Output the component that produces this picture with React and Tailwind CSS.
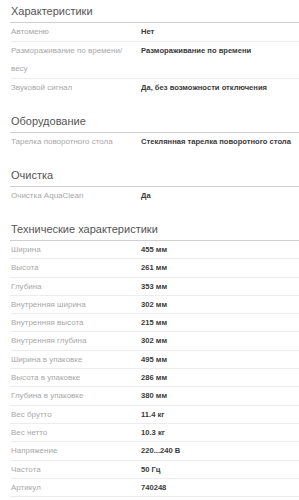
const sections = [
  {
    title: "Характеристики",
    rows: [
      ["Автоменю", "Нет"],
      ["Размораживание по времени/ весу", "Размораживание по времени"],
      ["Звуковой сигнал", "Да, без возможности отключения"],
    ],
  },
  {
    title: "Оборудование",
    rows: [["Тарелка поворотного стола", "Стеклянная тарелка поворотного стола"]],
  },
  {
    title: "Очистка",
    rows: [["Очистка AquaClean", "Да"]],
  },
  {
    title: "Технические характеристики",
    dense: true,
    rows: [
      ["Ширина", "455 мм"],
      ["Высота", "261 мм"],
      ["Глубина", "353 мм"],
      ["Внутренняя ширина", "302 мм"],
      ["Внутренняя высота", "215 мм"],
      ["Внутренняя глубина", "302 мм"],
      ["Ширина в упаковке", "495 мм"],
      ["Высота в упаковке", "286 мм"],
      ["Глубина в упаковке", "380 мм"],
      ["Вес брутто", "11.4 кг"],
      ["Вес нетто", "10.3 кг"],
      ["Напряжение", "220...240 В"],
      ["Частота", "50 Гц"],
      ["Артикул", "740248"],
    ],
  },
];

export default function App() {
  return (
    <div className="h-[500px] overflow-hidden bg-white pl-[10px] font-['Liberation_Sans',Arial,sans-serif]">
      {sections.map((section, i) => (
        <section key={section.title} className={i ? "mt-[13px]" : ""}>
          <h2 className="border-b border-[#cfcfcf] pt-[4px] pb-[4px] pl-[1px] text-[11px] font-normal leading-[14px] text-[#555]">
            {section.title}
          </h2>
          <div className={section.dense ? "border-b border-[#ececec]" : ""}>
            {section.rows.map(([label, value], j) => (
              <div
                key={label}
                className={`flex text-[8px] ${section.dense ? "leading-[17.3px]" : "leading-[18px]"} ${j ? "border-t border-[#ececec]" : ""}`}
              >
                <div className="w-[130px] shrink-0 pl-[1px] pr-[10px] text-[#a8a8a8]">{label}</div>
                <div className="flex-1 pl-[1px] text-[7.6px] font-bold text-[#3a3a3a]">{value}</div>
              </div>
            ))}
          </div>
        </section>
      ))}
    </div>
  );
}
